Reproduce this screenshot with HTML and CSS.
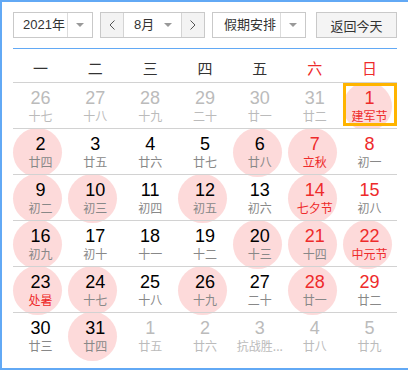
FILE: index.html
```html
<!DOCTYPE html>
<html lang="zh-CN">
<head>
    <meta charset="UTF-8">
    <meta name="viewport" content="width=device-width, initial-scale=1.0">
    <title>万年历</title>
    <link rel="stylesheet" href="styles.css">
</head>
<body>

    <div class="calendar">
        <!-- Toolbar -->
        <div class="toolbar">
            <div class="select year">
                <span class="value">2021年</span>
                <span class="arrow"><i class="caret"></i></span>
            </div>

            <div class="pager">
                <span class="step">
                    <svg width="6" height="10" viewBox="0 0 6 10"><polyline points="5.5,0.5 1,5 5.5,9.5" fill="none" stroke="#555" stroke-width="1"/></svg>
                </span>
                <span class="month">
                    <span class="value">8月</span>
                    <i class="caret"></i>
                </span>
                <span class="step">
                    <svg width="6" height="10" viewBox="0 0 6 10"><polyline points="0.5,0.5 5,5 0.5,9.5" fill="none" stroke="#555" stroke-width="1"/></svg>
                </span>
            </div>

            <div class="select holiday">
                <span class="value">假期安排</span>
                <span class="arrow"><i class="caret"></i></span>
            </div>

            <button class="today-btn">返回今天</button>
        </div>

        <!-- Week header -->
        <div class="weekdays">
            <span>一</span>
            <span>二</span>
            <span>三</span>
            <span>四</span>
            <span>五</span>
            <span class="weekend">六</span>
            <span class="weekend">日</span>
        </div>

        <!-- Days -->
        <div class="days">
            <div class="day other"><span class="num">26</span><span class="lunar">十七</span></div>
            <div class="day other"><span class="num">27</span><span class="lunar">十八</span></div>
            <div class="day other"><span class="num">28</span><span class="lunar">十九</span></div>
            <div class="day other"><span class="num">29</span><span class="lunar">二十</span></div>
            <div class="day other"><span class="num">30</span><span class="lunar">廿一</span></div>
            <div class="day other"><span class="num">31</span><span class="lunar">廿二</span></div>
            <div class="day weekend mark today"><span class="num">1</span><span class="lunar fest">建军节</span></div>

            <div class="day mark"><span class="num">2</span><span class="lunar">廿四</span></div>
            <div class="day"><span class="num">3</span><span class="lunar">廿五</span></div>
            <div class="day"><span class="num">4</span><span class="lunar">廿六</span></div>
            <div class="day"><span class="num">5</span><span class="lunar">廿七</span></div>
            <div class="day mark"><span class="num">6</span><span class="lunar">廿八</span></div>
            <div class="day weekend mark"><span class="num">7</span><span class="lunar fest">立秋</span></div>
            <div class="day weekend"><span class="num">8</span><span class="lunar">初一</span></div>

            <div class="day mark"><span class="num">9</span><span class="lunar">初二</span></div>
            <div class="day mark"><span class="num">10</span><span class="lunar">初三</span></div>
            <div class="day"><span class="num">11</span><span class="lunar">初四</span></div>
            <div class="day mark"><span class="num">12</span><span class="lunar">初五</span></div>
            <div class="day"><span class="num">13</span><span class="lunar">初六</span></div>
            <div class="day weekend mark"><span class="num">14</span><span class="lunar fest">七夕节</span></div>
            <div class="day weekend"><span class="num">15</span><span class="lunar">初八</span></div>

            <div class="day mark"><span class="num">16</span><span class="lunar">初九</span></div>
            <div class="day"><span class="num">17</span><span class="lunar">初十</span></div>
            <div class="day"><span class="num">18</span><span class="lunar">十一</span></div>
            <div class="day"><span class="num">19</span><span class="lunar">十二</span></div>
            <div class="day mark"><span class="num">20</span><span class="lunar">十三</span></div>
            <div class="day weekend mark"><span class="num">21</span><span class="lunar">十四</span></div>
            <div class="day weekend mark"><span class="num">22</span><span class="lunar fest">中元节</span></div>

            <div class="day mark"><span class="num">23</span><span class="lunar fest">处暑</span></div>
            <div class="day mark"><span class="num">24</span><span class="lunar">十七</span></div>
            <div class="day"><span class="num">25</span><span class="lunar">十八</span></div>
            <div class="day mark"><span class="num">26</span><span class="lunar">十九</span></div>
            <div class="day"><span class="num">27</span><span class="lunar">二十</span></div>
            <div class="day weekend mark"><span class="num">28</span><span class="lunar">廿一</span></div>
            <div class="day weekend"><span class="num">29</span><span class="lunar">廿二</span></div>

            <div class="day"><span class="num">30</span><span class="lunar">廿三</span></div>
            <div class="day mark"><span class="num">31</span><span class="lunar">廿四</span></div>
            <div class="day other"><span class="num">1</span><span class="lunar">廿五</span></div>
            <div class="day other"><span class="num">2</span><span class="lunar">廿六</span></div>
            <div class="day other"><span class="num">3</span><span class="lunar">抗战胜...</span></div>
            <div class="day other"><span class="num">4</span><span class="lunar">廿八</span></div>
            <div class="day other"><span class="num">5</span><span class="lunar">廿九</span></div>
        </div>
    </div>

</body>
</html>
```

FILE: styles.css
```css
body {
    margin: 0;
    font-family: "Liberation Sans", "Noto Sans CJK SC", sans-serif;
    background: #fff;
}

.calendar {
    width: 408px;
    height: 370px;
    box-sizing: border-box;
    border: 2px solid #62a9f5;
    border-right: none; /* right edge falls outside the window */
    padding: 10px 11px 0;
}

/* ---------- toolbar ---------- */

.toolbar {
    display: flex;
    height: 26px;
    font-size: 13px;
    color: #333;
}

.select {
    display: flex;
    height: 26px;
    box-sizing: border-box;
    border: 1px solid #c9c9c9;
    background: #fff;
}

.select .value {
    flex: 1;
    padding-left: 9px;
    line-height: 24px;
}

.select .arrow {
    width: 24px;
    border-left: 1px solid #dcdcdc;
    display: flex;
    align-items: center;
    justify-content: center;
}

.caret {
    display: block;
    width: 0;
    height: 0;
    border-left: 4px solid transparent;
    border-right: 4px solid transparent;
    border-top: 4px solid #999;
}

.year {
    width: 80px;
    margin-right: 7px;
}

.holiday {
    width: 94px;
    margin-right: 10px;
}

.holiday .value {
    padding-left: 11px;
}

.pager {
    display: flex;
    width: 105px;
    height: 26px;
    box-sizing: border-box;
    border: 1px solid #c9c9c9;
    margin-right: 7px;
}

.pager .step {
    width: 22px;
    background: #f3f3f3;
    display: flex;
    align-items: center;
    justify-content: center;
}

.pager .step:first-child {
    border-right: 1px solid #d4d4d4;
}

.pager .step:last-child {
    border-left: 1px solid #d4d4d4;
}

.pager .month {
    flex: 1;
    display: flex;
    align-items: center;
    background: #fff;
    padding: 0 9px 0 10px;
}

.pager .month .value {
    flex: 1;
    line-height: 24px;
}

.today-btn {
    width: 81px;
    height: 26px;
    padding: 0;
    border: 1px solid #c9c9c9;
    background: #f4f4f4;
    font-family: "Liberation Sans", "Noto Sans CJK SC", sans-serif;
    font-size: 13px;
    color: #333;
}

/* ---------- week header ---------- */

.weekdays {
    display: grid;
    grid-template-columns: repeat(7, 1fr);
    margin-top: 10px;
    border-top: 1px solid #62a9f5;
    padding-top: 5px;
    height: 28px;
    line-height: 28px;
    text-align: center;
    font-family: "Noto Sans CJK SC", sans-serif;
    font-size: 15px;
    color: #333;
}

.weekdays .weekend {
    color: #ee2b2b;
}

/* ---------- day grid ---------- */

.days {
    display: grid;
    grid-template-columns: repeat(7, 1fr);
    grid-auto-rows: 46px;
    position: relative;
    z-index: 0; /* keeps the circles under the grid lines */
}

.day {
    position: relative;
    box-sizing: border-box;
    border-top: 1px solid #d2d2d2;
    padding-top: 5px;
    text-align: center;
}

.day .num {
    display: block;
    font-size: 18px;
    line-height: 20px;
    color: #000;
}

.day .lunar {
    display: block;
    font-family: "Noto Sans CJK SC", sans-serif;
    font-size: 12px;
    line-height: 16px;
    color: #888;
    white-space: nowrap;
}

.day.weekend .num,
.day .lunar.fest {
    color: #ee2b2b;
}

.day.other .num,
.day.other .lunar {
    color: #bbb;
}

/* pink circle behind marked days */
.day.mark::before {
    content: "";
    position: absolute;
    left: 50%;
    top: 50%;
    width: 49px;
    height: 49px;
    margin-left: -27px;
    margin-top: -24px;
    border-radius: 50%;
    background: #fddada;
    z-index: -1;
}

/* selected day */
.day.today {
    overflow: hidden;
}

.day.today::after {
    content: "";
    position: absolute;
    top: 0;
    left: 1px;
    right: 0;
    bottom: 2px;
    border: 3px solid #ffb400;
}
```
